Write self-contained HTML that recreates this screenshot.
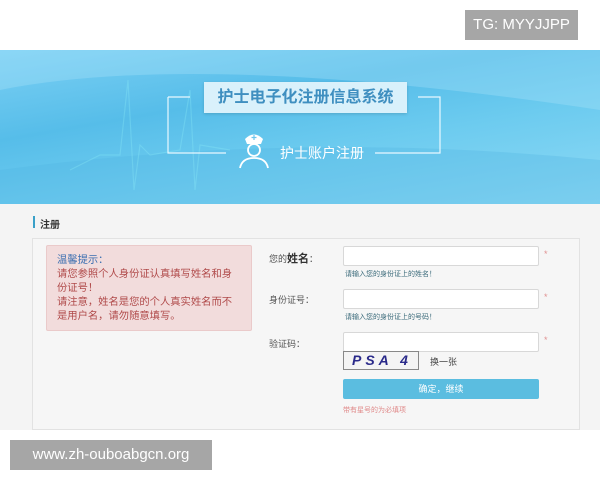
<!DOCTYPE html>
<html><head><meta charset="utf-8"><style>
*{margin:0;padding:0;box-sizing:border-box}
body{width:600px;height:480px;background:#fff;font-family:"Liberation Sans","Noto Sans CJK SC",sans-serif;position:relative;overflow:hidden}
.abs{position:absolute}
.banner{left:0;top:50px;width:600px;height:154px;background:linear-gradient(170deg,#7cd0f4 0%,#56bde9 35%,#6ccbef 60%,#8edaf5 100%);overflow:hidden}
.gray{left:0;top:204px;width:600px;height:226px;background:#f4f4f4}
.card{left:32px;top:238px;width:548px;height:192px;border:1px solid #e2e2e2;background:#f6f6f6}
.tip{left:46px;top:245px;width:206px;height:86px;background:#f2dcdc;border:1px solid #eacaca;border-radius:2px;padding:8px 14px 8px 10px;font-size:10.3px;line-height:14px;color:#b04a4a}
.lbl{font-size:9px;color:#555}
.inp{left:343px;width:196px;height:20px;background:#fff;border:1px solid #d8d8d8;border-radius:2px}
.hint{left:345px;font-size:7px;color:#3a6a7a}
.star{left:544px;font-size:9px;color:#e09090}
</style></head><body>
<div class="abs banner">
<svg width="600" height="154" style="position:absolute;left:0;top:0">
<path d="M0 40 Q200 0 600 60 L600 0 L0 0Z" fill="#a9e2f8" opacity=".35"/>
<path d="M0 120 Q300 80 600 110 L600 154 L0 154Z" fill="#4fb4e2" opacity=".3"/>
<polyline points="70,120 100,105 120,105 128,30 134,140 140,95 150,105 180,100 190,40 195,140 200,95 230,100" fill="none" stroke="#8ff0fa" stroke-width="1.2" opacity=".3"/>
<polyline points="168,47 190,47" stroke="#e8f8ff" fill="none" stroke-width="1.2"/>
<polyline points="168,47 168,103 226,103" stroke="#e8f8ff" fill="none" stroke-width="1.2"/>
<polyline points="418,47 440,47 440,103 375,103" stroke="#e8f8ff" fill="none" stroke-width="1.2"/>
<path d="M245 89 Q254 80 263 89 L261 94 L247 94Z" fill="#fff"/>
<path d="M254 85v5M251.5 87.5h5" stroke="#6cc6ee" stroke-width="1.2"/>
<circle cx="254" cy="100" r="6" fill="none" stroke="#fff" stroke-width="1.8"/>
<path d="M240 118 Q242 108 254 108 Q266 108 268 118" fill="none" stroke="#fff" stroke-width="1.8"/>
</svg>
<div class="abs" style="left:204px;top:32px;width:203px;height:31px;background:#d9f1fb;box-shadow:0 1px 3px rgba(0,0,0,.15);font-size:16px;font-weight:bold;color:#3f8fc0;text-align:center;line-height:31px">护士电子化注册信息系统</div>
<div class="abs" style="left:280px;top:93px;font-size:14px;color:#fff">护士账户注册</div>
</div>
<div class="abs gray"></div>
<div class="abs" style="left:33px;top:216px;width:2px;height:12px;background:#3aa0c8"></div>
<div class="abs" style="left:40px;top:216px;font-size:10px;color:#333;font-weight:bold">注册</div>
<div class="abs card"></div>
<div class="abs tip"><span style="color:#3a6eb0">温馨提示：</span><br>请您参照个人身份证认真填写姓名和身份证号！<br>请注意，姓名是您的个人真实姓名而不是用户名，请勿随意填写。</div>
<div class="abs lbl" style="left:269px;top:250px">您的<b style="font-size:11px;color:#333">姓名</b>：</div>
<div class="abs lbl" style="left:269px;top:293px">身份证号：</div>
<div class="abs lbl" style="left:269px;top:337px">验证码：</div>
<div class="abs inp" style="top:246px"></div>
<div class="abs inp" style="top:289px"></div>
<div class="abs inp" style="top:332px"></div>
<div class="abs star" style="top:249px">*</div>
<div class="abs star" style="top:292px">*</div>
<div class="abs star" style="top:335px">*</div>
<div class="abs hint" style="top:269px">请输入您的身份证上的姓名！</div>
<div class="abs hint" style="top:312px">请输入您的身份证上的号码！</div>
<div class="abs" style="left:343px;top:351px;width:76px;height:19px;background:#f4f4f4;border:1px solid #888;font:italic bold 14px 'Liberation Sans',sans-serif;color:#2a2a8a;letter-spacing:4px;padding-left:8px;line-height:17px">PSA 4</div>
<div class="abs" style="left:430px;top:355px;font-size:9px;color:#444">换一张</div>
<div class="abs" style="left:343px;top:379px;width:196px;height:20px;background:#5bbde0;border-radius:2px;color:#fff;font-size:9px;text-align:center;line-height:20px">确定，继续</div>
<div class="abs" style="left:343px;top:405px;font-size:7px;color:#e08a8a">带有星号的为必填项</div>
<div class="abs" style="left:465px;top:10px;width:113px;height:30px;background:#a6a6a6;color:#fff;font-size:15px;line-height:30px;text-align:center">TG: MYYJJPP</div>
<div class="abs" style="left:10px;top:440px;width:202px;height:30px;background:#a6a6a6;color:#fff;font-size:15px;line-height:30px;text-align:center">www.zh-ouboabgcn.org</div>
</body></html>
